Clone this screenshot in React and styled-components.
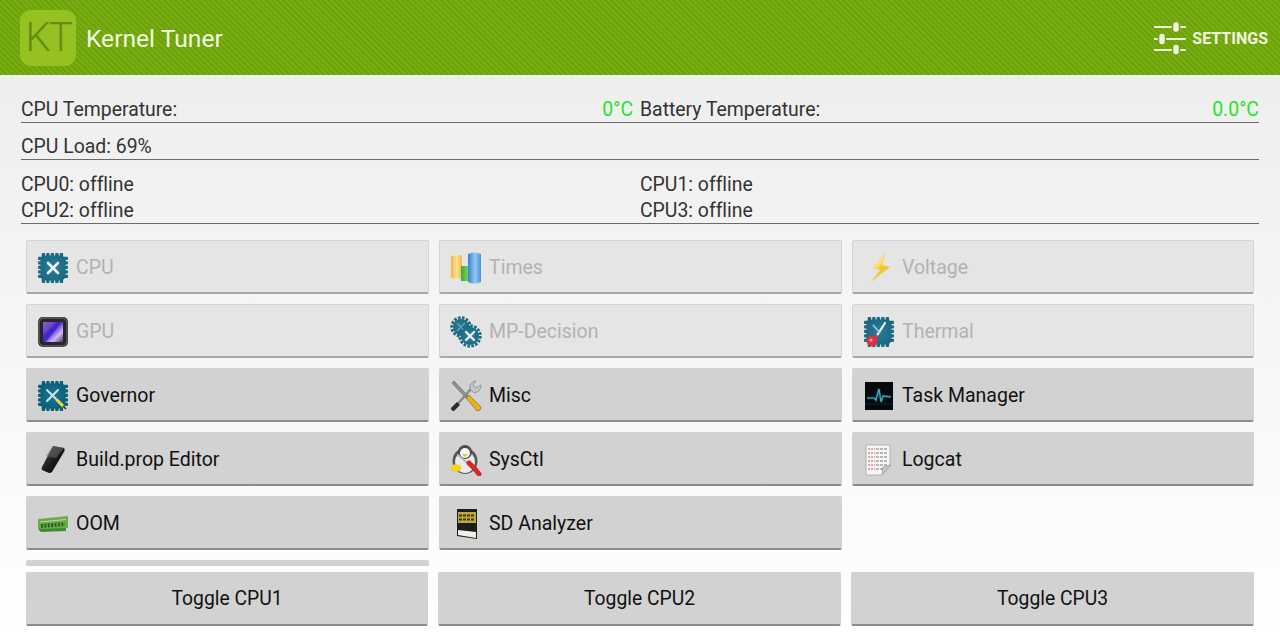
import React from "react";
import styled, { createGlobalStyle } from "styled-components";

const GlobalStyle = createGlobalStyle`
  html, body {
    margin: 0;
    padding: 0;
    height: 100%;
    overflow: hidden;
  }
  body {
    font-family: Roboto, "Liberation Sans", sans-serif;
    font-variant-ligatures: none;
  }
`;

const GradientDefs = () => (
  <svg width="0" height="0" style={{ position: "absolute" }}>
    <defs>
      <linearGradient id="barOrange" x1="0" x2="1">
        <stop offset="0" stopColor="#f2b035" />
        <stop offset="0.5" stopColor="#ffe08a" />
        <stop offset="1" stopColor="#f0b840" />
      </linearGradient>
      <linearGradient id="barGreen" x1="0" x2="1">
        <stop offset="0" stopColor="#2fa52f" />
        <stop offset="1" stopColor="#86dc50" />
      </linearGradient>
      <linearGradient id="barBlue" x1="0" x2="1">
        <stop offset="0" stopColor="#2a78cc" />
        <stop offset="0.55" stopColor="#8ec8f2" />
        <stop offset="1" stopColor="#3a8ad8" />
      </linearGradient>
      <linearGradient id="gpuScreen" x1="0" y1="0" x2="1" y2="1">
        <stop offset="0" stopColor="#8a5ab8" />
        <stop offset="0.45" stopColor="#4a1ce0" />
        <stop offset="0.72" stopColor="#d2b6f2" />
        <stop offset="1" stopColor="#3c1a70" />
      </linearGradient>
      <linearGradient id="phoneBody" x1="0" y1="0" x2="1" y2="1">
        <stop offset="0" stopColor="#5c5c5c" />
        <stop offset="0.5" stopColor="#1c1c1c" />
        <stop offset="1" stopColor="#000" />
      </linearGradient>
      <radialGradient id="chipFace" cx="0.5" cy="0.5" r="0.7">
        <stop offset="0" stopColor="#16799a" />
        <stop offset="1" stopColor="#0b5770" />
      </radialGradient>
    </defs>
  </svg>
);

const Glyph = ({ children }) => (
  <svg width="32" height="32" viewBox="0 0 32 32" fill="none">
    {children}
  </svg>
);

const pinSpots = [4.5, 9, 13.5, 18, 22.5];

const ChipBody = () => (
  <>
    {pinSpots.map((p) => (
      <g key={p} fill="#0c5f7a">
        <rect x={p + 0.2} y="1" width="3.4" height="30" rx="1" />
        <rect x="1" y={p + 0.2} width="30" height="3.4" rx="1" />
      </g>
    ))}
    <rect x="3.5" y="3.5" width="25" height="25" rx="5" fill="url(#chipFace)" />
  </>
);

const CpuIcon = () => (
  <Glyph>
    <ChipBody />
    <path d="M11 11L21 21M21 11L11 21" stroke="#f2f8fa" strokeWidth="2.6" strokeLinecap="round" />
  </Glyph>
);

const GovernorIcon = () => (
  <Glyph>
    <ChipBody />
    <path d="M10 10L19 19M21 10L10 21" stroke="#cfe4ea" strokeWidth="2" strokeLinecap="round" />
    <path d="M20 20L26 26" stroke="#f1d53a" strokeWidth="3" strokeLinecap="round" />
    <path d="M26 26L29 29" stroke="#333" strokeWidth="1.6" />
  </Glyph>
);

const ThermalIcon = () => (
  <Glyph>
    <ChipBody />
    <path d="M22 7L13 21" stroke="#f2f8fa" strokeWidth="2.2" strokeLinecap="round" />
    <path d="M10 9L17 17" stroke="#a9cfda" strokeWidth="1.4" />
    <circle cx="9" cy="25" r="5.4" fill="#d8262c" />
    <circle cx="8" cy="24" r="1.6" fill="#f7a0a0" />
    <path d="M14 19L11 23" stroke="#d8262c" strokeWidth="3" />
  </Glyph>
);

const GearShape = ({ cx, cy, r }) => (
  <>
    <circle cx={cx} cy={cy} r={r + 1.2} stroke="#0c5f7a" strokeWidth="3" strokeDasharray="2.6 1.4" />
    <circle cx={cx} cy={cy} r={r} fill="url(#chipFace)" />
  </>
);

const MpDecisionIcon = () => (
  <Glyph>
    <GearShape cx={11} cy={11} r={8} />
    <path d="M7 7L15 15M15 7L7 15" stroke="#5f9db0" strokeWidth="1.4" />
    <GearShape cx={20} cy={20} r={9} />
    <path d="M16 16L24 24M24 16L16 24" stroke="#f2f8fa" strokeWidth="2.4" strokeLinecap="round" />
  </Glyph>
);

const TimesIcon = () => (
  <Glyph>
    <path d="M1 4L12 3V27L1 26Z" fill="url(#barOrange)" />
    <path d="M11 14H20V29H11Z" fill="url(#barGreen)" />
    <path d="M18 2Q24 -1 31 2V30Q24 33 18 30Z" fill="url(#barBlue)" />
  </Glyph>
);

const VoltageIcon = () => (
  <Glyph>
    <path d="M23 1L10 16L17 18L8 30L27 15L19 13Z" fill="#f2c81e" />
    <path d="M23 1L10 16L15 17L20 9Z" fill="#fae264" />
  </Glyph>
);

const GpuIcon = () => (
  <Glyph>
    <rect x="1" y="1" width="30" height="30" rx="5" fill="#17171b" />
    <rect x="2" y="2" width="28" height="28" rx="5" fill="none" stroke="#6d6d72" strokeWidth="1" />
    <rect x="6" y="6" width="20" height="20" rx="1" fill="url(#gpuScreen)" />
    <path d="M6 20L20 6L25 6L9 26L6 26Z" fill="#2d12b8" opacity="0.7" />
  </Glyph>
);

const MiscIcon = () => (
  <Glyph>
    <path d="M2 3L4 1L18 16L16 18Z" fill="#8f9499" stroke="#55595d" strokeWidth="0.6" />
    <path d="M16 18L19 15L31 27Q31 31 27 31Z" fill="#e8b21e" stroke="#7a5d10" strokeWidth="0.6" />
    <path d="M4 28L21 9" stroke="#85898d" strokeWidth="2.6" />
    <path d="M1 28L7 22L10 25L4 31Q1 31 1 28Z" fill="#2a2a2a" />
    <path d="M20 9Q19 3 25 1L26 1L23 5L26 8L31 5Q31 12 24 13Z" fill="#c2c6ca" stroke="#6f7377" strokeWidth="0.6" />
  </Glyph>
);

const TaskManagerIcon = () => (
  <Glyph>
    <rect x="2" y="2" width="28" height="28" fill="#05090c" />
    <path d="M4 18L11 18L13 20L16 9L18 22L20 16L28 17" stroke="#2f8fa8" strokeWidth="3" opacity="0.35" />
    <path d="M4 18L11 18L13 20L16 9L18 22L20 16L28 17" stroke="#3fb0c0" strokeWidth="1.2" />
    <path d="M2 24H30" stroke="#0c2a30" strokeWidth="1" />
  </Glyph>
);

const BuildPropIcon = () => (
  <Glyph>
    <path d="M16 2L27 4Q28 5 27.5 7L15 28Q14 29 12 29L5 26Q4 25 5 23Z" fill="url(#phoneBody)" />
    <path d="M16 2L27 4L19 14L9 12Z" fill="#6b6b6b" opacity="0.55" />
  </Glyph>
);

const SysCtlIcon = () => (
  <Glyph>
    <ellipse cx="15" cy="17" rx="12.5" ry="13" fill="#55585c" />
    <ellipse cx="15" cy="18" rx="10" ry="11" fill="#ebebeb" />
    <circle cx="15" cy="8" r="7" fill="#4a4a4a" />
    <circle cx="15" cy="9" r="5" fill="#f5f5f5" />
    <path d="M12 10L18 10L15 13Z" fill="#f2c21a" />
    <ellipse cx="6" cy="24" rx="5.4" ry="3.8" fill="#f2d41e" />
    <path d="M8 11L21 22" stroke="#b4b8bc" strokeWidth="2" />
    <path d="M19 19L24 24L29 30" stroke="#cf2b2b" strokeWidth="5" strokeLinecap="round" />
  </Glyph>
);

const LogcatIcon = () => (
  <Glyph>
    <path d="M3 1H27V21L19 31H3Z" fill="#f6f6f6" stroke="#a5a5a5" strokeWidth="0.8" />
    {[5, 9, 13, 17, 21, 25].map((y) => (
      <g key={y}>
        <path d={`M5 ${y}H12`} stroke="#d98a8a" strokeWidth="1.3" strokeDasharray="2 1" />
        <path d={`M13 ${y}H25`} stroke="#777" strokeWidth="1.1" strokeDasharray="3 1" />
      </g>
    ))}
    <path d="M19 31L20 23L28 21Z" fill="#c8c8c8" stroke="#8d8d8d" strokeWidth="0.6" />
  </Glyph>
);

const OomIcon = () => (
  <Glyph>
    <path d="M1 14H29V23L4 24L1 21Z" fill="#3f8a32" />
    <path d="M1 11L31 8V20L1 21Z" fill="#6cab4c" />
    <path d="M3 14L29 11.5" stroke="#c0dca0" strokeWidth="1" />
    <path d="M4 18L28 16" stroke="#27602a" strokeWidth="4" strokeDasharray="2 1.4" />
  </Glyph>
);

const SdAnalyzerIcon = () => (
  <Glyph>
    <path d="M7 1H27V31L7 28Z" fill="#1d1d1a" />
    <rect x="8" y="4" width="18" height="11" fill="#c2a83a" />
    <path d="M9 7.5H25M9 11.5H25" stroke="#3b3418" strokeWidth="1.8" strokeDasharray="3 1" />
    <path d="M8 22L26 24V30L8 27Z" fill="#f1f1ec" />
  </Glyph>
);

const SlidersIcon = () => (
  <svg width="34" height="34" viewBox="0 0 34 34" fill="none">
    <g stroke="#eef5dc" strokeWidth="2">
      <path d="M1 6H33M1 18H33M1 29H33" />
    </g>
    <g fill="#eef5dc" stroke="#6fa30c" strokeWidth="1.5">
      <rect x="19.5" y="0.5" width="7" height="11" rx="3" />
      <rect x="5.5" y="12" width="7" height="12" rx="3" />
      <rect x="19.5" y="23" width="7" height="11" rx="3" />
    </g>
  </svg>
);

const Screen = styled.div`
  width: 1280px;
  height: 632px;
  display: flex;
  flex-direction: column;
  overflow: hidden;
  background: linear-gradient(180deg, #ececec 0%, #ffffff 100%);
`;

const ActionBar = styled.header`
  flex: none;
  height: 75px;
  display: flex;
  align-items: center;
  justify-content: space-between;
  padding: 1px 12px 0 20px;
  box-sizing: border-box;
  background: repeating-linear-gradient(45deg, #6ea20b 0 2px, #79ad14 2px 4px);
`;

const Brand = styled.div`
  display: flex;
  align-items: center;
  gap: 10px;
`;

const Logo = styled.div`
  width: 56px;
  height: 56px;
  border-radius: 11px;
  background: #95c220;
  color: #638c10;
  font-size: 40px;
  font-weight: 300;
  line-height: 56px;
  letter-spacing: -2px;
  text-align: center;
`;

const AppTitle = styled.h1`
  margin: 0;
  color: #f0f6df;
  font-size: 24.6px;
  font-weight: 400;
`;

const SettingsAction = styled.button`
  display: flex;
  align-items: center;
  gap: 5px;
  border: 0;
  padding: 0;
  background: none;
  color: #eef5dc;
  font: 700 16px Roboto, sans-serif;
`;

const Stats = styled.section`
  flex: none;
  padding: 21px 21px 0;
  color: #333;
  font-size: 19.4px;
`;

const StatRow = styled.div`
  display: grid;
  grid-template-columns: 612px 619px;
  column-gap: 7px;
  height: 26px;
  line-height: 28px;
  border-bottom: 1px solid #6b6b6b;
  margin-bottom: 10px;
`;

const StatCell = styled.div`
  display: flex;
  justify-content: space-between;
`;

const Reading = styled.span`
  color: #22e62a;
`;

const CoreGrid = styled.div`
  display: grid;
  grid-template-columns: 619px 619px;
  grid-auto-rows: 26px;
  line-height: 28px;
  padding: 1px 0 0;
  border-bottom: 1px solid #6b6b6b;
`;

const ToolGrid = styled.div`
  flex: none;
  height: 326px;
  margin: 16px 26px 0;
  overflow: hidden;
  display: grid;
  grid-template-columns: 403px 403px 402px;
  grid-auto-rows: 54px;
  gap: 10px;
`;

const ToolButton = styled.button`
  display: flex;
  align-items: center;
  gap: 7px;
  padding: 2px 0 0 10px;
  margin: 0;
  box-sizing: border-box;
  height: 54px;
  border: 1px solid ${(p) => (p.disabled ? "#d4d4d4" : "#d2d2d2")};
  border-bottom: 2px solid ${(p) => (p.disabled ? "#a8a8a8" : "#8c8c8c")};
  border-radius: 2px;
  background: ${(p) => (p.disabled ? "#e5e5e5" : "#d2d2d2")};
  color: ${(p) => (p.disabled ? "#b2b2b2" : "#111")};
  font: 400 19.5px Roboto, sans-serif;
  font-variant-ligatures: none;
  grid-column: ${(p) => p.$column || "auto"};
  svg {
    flex: none;
    opacity: ${(p) => (p.disabled ? 0.92 : 1)};
  }
`;

const ToggleRow = styled.div`
  flex: none;
  margin: 6px 26px 0;
  display: grid;
  grid-template-columns: 402px 403px 403px;
  gap: 10px;
`;

const ToggleButton = styled.button`
  height: 54px;
  padding: 0;
  box-sizing: border-box;
  border: 1px solid #d2d2d2;
  border-bottom: 2px solid #8c8c8c;
  border-radius: 2px;
  background: #d2d2d2;
  color: #111;
  font: 400 19.3px Roboto, sans-serif;
`;

const tools = [
  { label: "CPU", Icon: CpuIcon, off: true },
  { label: "Times", Icon: TimesIcon, off: true },
  { label: "Voltage", Icon: VoltageIcon, off: true },
  { label: "GPU", Icon: GpuIcon, off: true },
  { label: "MP-Decision", Icon: MpDecisionIcon, off: true },
  { label: "Thermal", Icon: ThermalIcon, off: true },
  { label: "Governor", Icon: GovernorIcon },
  { label: "Misc", Icon: MiscIcon },
  { label: "Task Manager", Icon: TaskManagerIcon },
  { label: "Build.prop Editor", Icon: BuildPropIcon },
  { label: "SysCtl", Icon: SysCtlIcon },
  { label: "Logcat", Icon: LogcatIcon },
  { label: "OOM", Icon: OomIcon },
  { label: "SD Analyzer", Icon: SdAnalyzerIcon },
];

const App = () => {
  return (
    <Screen>
      <GlobalStyle />
      <GradientDefs />
      <ActionBar>
        <Brand>
          <Logo>KT</Logo>
          <AppTitle>Kernel Tuner</AppTitle>
        </Brand>
        <SettingsAction>
          <SlidersIcon />
          SETTINGS
        </SettingsAction>
      </ActionBar>
      <Stats>
        <StatRow>
          <StatCell>
            CPU Temperature: <Reading>0°C</Reading>
          </StatCell>
          <StatCell>
            Battery Temperature: <Reading>0.0°C</Reading>
          </StatCell>
        </StatRow>
        <StatRow>
          <StatCell>CPU Load: 69%</StatCell>
        </StatRow>
        <CoreGrid>
          <div>CPU0: offline</div>
          <div>CPU1: offline</div>
          <div>CPU2: offline</div>
          <div>CPU3: offline</div>
        </CoreGrid>
      </Stats>
      <ToolGrid>
        {tools.map(({ label, Icon, off }) => (
          <ToolButton key={label} disabled={off}>
            <Icon />
            {label}
          </ToolButton>
        ))}
        <ToolButton $column="1" />
      </ToolGrid>
      <ToggleRow>
        <ToggleButton>Toggle CPU1</ToggleButton>
        <ToggleButton>Toggle CPU2</ToggleButton>
        <ToggleButton>Toggle CPU3</ToggleButton>
      </ToggleRow>
    </Screen>
  );
};

export default App;
